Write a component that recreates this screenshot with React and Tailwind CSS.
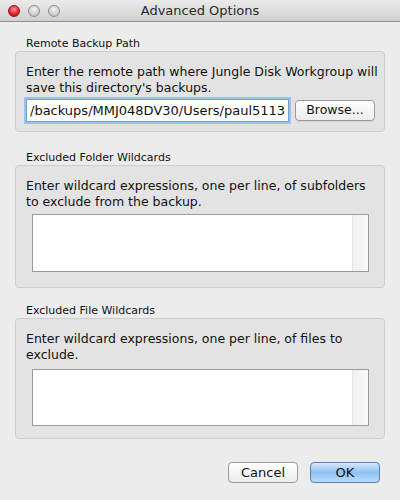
import { useState } from "react";

function Light({ color }) {
  const styles = {
    red: "bg-[radial-gradient(circle_at_50%_35%,#ff9a9a_0%,#e6262a_55%,#a3080c_100%)] border-[#8e1a1a]",
    gray: "bg-[radial-gradient(circle_at_50%_35%,#f4f4f4_0%,#cfcfcf_60%,#a8a8a8_100%)] border-[#8f8f8f]",
  };
  return <div className={`w-[12px] h-[12px] rounded-full border ${styles[color]}`} />;
}

function Group({ label, boxClass, children }) {
  return (
    <div className="flex flex-col">
      <div className="pl-[11px] text-[11px] leading-[13px] text-[#111]">{label}</div>
      <div
        className={`mt-[1px] rounded-[4px] border border-[#cdcdcd] bg-[#e3e3e3] pl-[10px] pr-[2px] pt-[12px] ${boxClass}`}
      >
        {children}
      </div>
    </div>
  );
}

function Desc({ children }) {
  return <p className="w-[354px] text-[12.5px] leading-[16px] text-[#111]">{children}</p>;
}

function WildcardBox({ className }) {
  return (
    <div className={`ml-[6px] mr-[13px] flex border border-[#9a9a9a] bg-white ${className}`}>
      <div className="flex-1" />
      <div className="w-[16px] bg-gradient-to-r from-[#f0f0f0] to-[#fafafa] border-l border-[#e6e6e6]" />
    </div>
  );
}

export default function App() {
  const [path, setPath] = useState("/backups/MMJ048DV30/Users/paul5113");

  return (
    <div
      className="w-[400px] h-[500px] bg-[#ececec] flex flex-col overflow-hidden"
      style={{ fontFamily: '"DejaVu Sans", "Lucida Grande", sans-serif' }}
    >
      {/* title bar */}
      <div className="h-[22px] flex items-center px-[8px] bg-gradient-to-b from-[#ebebeb] to-[#d0d0d0] border-b border-[#8f8f8f] relative">
        <div className="flex gap-[8px]">
          <Light color="red" />
          <Light color="gray" />
          <Light color="gray" />
        </div>
        <div className="absolute inset-0 flex items-center justify-center text-[13px] text-[#2a2a2a]">
          Advanced Options
        </div>
      </div>

      <div className="flex flex-col px-[15px] pt-[15px]">
        <Group label="Remote Backup Path" boxClass="h-[81px]">
          <Desc>Enter the remote path where Jungle Disk Workgroup will save this directory's backups.</Desc>
          <div className="mt-[3px] flex items-center gap-[4px]">
            <input
              value={path}
              onChange={(e) => setPath(e.target.value)}
              className="w-[263px] h-[23px] px-[3px] text-[13px] text-[#111] bg-white border border-[#6f9fd6] outline-none shadow-[0_0_0_2px_#9fc2ea]"
            />
            <button className="ml-[2px] w-[80px] h-[21px] rounded-[4px] border border-[#9a9a9a] bg-gradient-to-b from-white to-[#ececec] text-[12.5px] text-[#111] shadow-[0_1px_0_rgba(0,0,0,0.08)]">
              Browse...
            </button>
          </div>
        </Group>

        <div className="mt-[19px]">
          <Group label="Excluded Folder Wildcards" boxClass="h-[123px]">
            <Desc>Enter wildcard expressions, one per line, of subfolders to exclude from the backup.</Desc>
            <WildcardBox className="mt-[4px] h-[58px]" />
          </Group>
        </div>

        <div className="mt-[16px]">
          <Group label="Excluded File Wildcards" boxClass="h-[121px]">
            <Desc>Enter wildcard expressions, one per line, of files to exclude.</Desc>
            <WildcardBox className="mt-[6px] h-[57px]" />
          </Group>
        </div>

        <div className="mt-[23px] flex justify-end gap-[12px] pr-[5px]">
          <button className="w-[70px] h-[21px] rounded-[4px] border border-[#9a9a9a] bg-gradient-to-b from-white to-[#ececec] text-[13px] text-[#111]">
            Cancel
          </button>
          <button className="w-[70px] h-[21px] rounded-[4px] border border-[#5a7fb0] bg-gradient-to-b from-[#d4e8fb] via-[#8fc2f2] to-[#b9dcfa] text-[13px] text-[#111]">
            OK
          </button>
        </div>
      </div>
    </div>
  );
}
